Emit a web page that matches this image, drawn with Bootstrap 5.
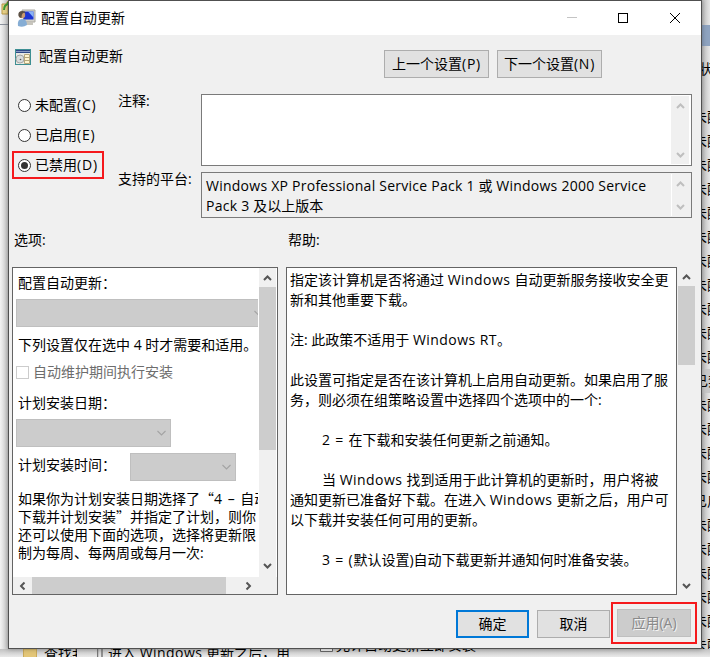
<!DOCTYPE html>
<html lang="zh-CN">
<head>
<meta charset="utf-8">
<title>配置自动更新</title>
<link href="https://cdn.jsdelivr.net/npm/bootstrap@5.3.0/dist/css/bootstrap.min.css" rel="stylesheet">
<style>
body{width:710px;height:657px;overflow:hidden;background:#f0f0f0;color:#000;font:14px/20px "Open Sans","Noto Sans CJK SC",sans-serif}
svg{display:block;flex:none}
.en{letter-spacing:.25px}
.word{letter-spacing:.45px}
.wide{letter-spacing:.8px}
.cjk{font-family:"Noto Sans CJK SC",sans-serif;line-height:0}
.backdrop{inset:0;background:#f0f0f0}
.edge-left{width:8px;background:linear-gradient(90deg,#f3f3f3,#c9c9c9)}
.edge-right{left:693px;width:17px;top:0;height:657px;background:linear-gradient(90deg,#bdbdbd 50%,#e6e6e6)}
.edge-right .state{height:24px;line-height:24px;overflow:hidden}
.edge-right .picked{background:#c9c9c9;padding-left:1px}
.list-head{height:21px;background:#8ea3c0;margin-top:25px}
.edge-bottom{left:0;right:0;top:649px;height:8px;background:linear-gradient(#c2c2c2,#e9e9e9)}
.dialog-win{left:8px;top:0;width:694px;height:649px;border:1px solid #505050;background:#f0f0f0;box-shadow:0 0 5px #0005}
.titlebar{height:34px;background:#fff;padding:0 20px 0 8px}
.wbtn{height:28px;width:105px;background:#e1e1e1;border:1px solid #adadad;border-radius:0;padding:0;font-size:14px;line-height:26px;color:#000}
.wbtn.foot{width:73px}
.wbtn.go{border:2px solid #0078d7;line-height:24px}
.wbtn.off{background:#ccc;border-color:#bfbfbf;color:#8a8a8a;text-shadow:1px 1px #f4f4f4;width:74px}
.heading{height:59px;padding:0 99px 0 6px}
.setup{height:136px;padding-left:3px}
.radios{width:102px;margin:-3px 4px 0 0}
.radios label{height:28px;margin-bottom:2px;padding-left:6px;border:2px solid transparent;width:92px}
.radios label.ringed{border-color:#f5191c}
.ring{width:13px;height:13px;border:1px solid #333;border-radius:50%;background:#fff;margin-left:-2px;margin-right:4px}
.ring.on::after{content:"";display:block;width:7px;height:7px;margin:2px;border-radius:50%;background:#333}
.names{width:87px}
.field{width:491px;border:1px solid #7a7a7a;padding:1px 2px 1px 1px}
.bar{width:17px;background:#f0f0f0;flex:none}
.field .bar{width:18px;padding:7px 0 6px;color:#bfbfbf}
.panel-box{border:1px solid #646464;background:#fff;height:328px}
.opts{width:245px;margin-right:1px;overflow:hidden;height:309px}
.opts .text-line{white-space:nowrap;padding-left:5px}
.combo{background:#ccc;border:1px solid #bfbfbf;height:28px;margin-left:3px}
.check{width:13px;height:13px;border:1px solid #ccc;background:#fff;margin-left:3px;margin-right:4px}
.thumb{background:#cdcdcd}
.help{width:391px;padding:2px 0 0 3px;white-space:pre}
.help div{height:20px}
.ind{padding-left:32px}
.apply-ring{border:2px solid #f5191c;width:86px;height:42px;padding:5px 0 0 4px}
</style>
<script src="https://cdn.jsdelivr.net/npm/bootstrap@5.3.0/dist/js/bootstrap.bundle.min.js"></script>
</head>
<body class="position-relative">
<svg width="0" height="0" class="position-absolute"><defs>
<symbol id="up" viewBox="0 0 9 6"><path d="M1 5 4.5 1.5 8 5" fill="none" stroke="currentColor" stroke-width="2"/></symbol>
<symbol id="down" viewBox="0 0 9 6"><path d="M1 1 4.5 4.5 8 1" fill="none" stroke="currentColor" stroke-width="2"/></symbol>
<symbol id="thin" viewBox="0 0 9 6"><path d="M.5 1 4.5 5 8.5 1" fill="none" stroke="#a3a3a3" stroke-width="1.1"/></symbol>
</defs></svg>

<div class="backdrop position-absolute overflow-hidden">
  <div class="edge-left h-100"><svg width="8" height="30"><path d="M2 4h4l2-3v13H2z" fill="#e9d38a" stroke="#b99a48"/><path d="M4 10q0-5 4-6v-2" stroke="#3f9d35" stroke-width="2" fill="none"/><path d="M0 24.500h8" stroke="#8b919c"/></svg></div>
  <div class="edge-right position-absolute text-nowrap overflow-hidden">
    <div class="list-head"></div>
    <div class="state" style="margin:11px 0 24px 6px">状态</div>
    <div class="state">未配置</div><div class="state">未配置</div><div class="state">未配置</div><div class="state">未配置</div><div class="state">未配置</div><div class="state">未配置</div><div class="state">未配置</div><div class="state">未配置</div><div class="state">未配置</div><div class="state">未配置</div><div class="state">未配置</div>
    <div class="state picked">已禁用</div>
    <div class="state">未配置</div><div class="state">未配置</div><div class="state">未配置</div><div class="state">未配置</div>
    <div class="state">已启用</div>
    <div class="state">未配置</div><div class="state">未配置</div><div class="state">未配置</div><div class="state">未配置</div><div class="state">未配置</div><div class="state">未配置</div>
  </div>
  <div class="edge-bottom position-absolute d-flex overflow-hidden text-nowrap">
    <svg width="44" height="8"><path d="M23.500 8V0h13v8" fill="#e3c678" stroke="#c9a95a"/></svg>
    <div class="overflow-hidden" style="width:33px;margin:-6px 20px 0 0">查找我</div>
    <svg width="11" height="8"><path d="M.5 0v8M5 0v8" stroke="#777" stroke-width="1.500"/></svg>
    <div style="width:212px;margin-top:-6px">进入 <span class="word">Windows</span> 更新之后，用</div>
    <svg width="16" height="8"><path d="M.5-5v7.500h12V-5" fill="#eee" stroke="#666"/></svg>
    <div style="margin-top:-14px">允许自动更新立即安装</div>
  </div>
</div>

<main class="dialog-win position-absolute">
  <header class="titlebar d-flex align-items-center">
    <svg width="19" height="19" viewBox="0 0 19 19"><path d="M5 1h13v12H7z" fill="#d4d2ca" stroke="#aaa9a2"/><path d="M6.500 2.500h10v8h-10z" fill="#1d35d2"/><path d="M11 2.500h5.500v6z" fill="#8ab3f5"/><path d="M9 13h7v3H9z" fill="#c7c5bd"/><path d="M1 17q-1-7 4-7t5 6q-4 3-9 1z" fill="#86add4"/><circle cx="5" cy="6" r="3.200" fill="#c99b70"/><path d="M1.500 7q-1-5 4-5 3 0 3 2-4-1-4 5-2 0-3-2z" fill="#5b5045"/></svg>
    <span class="ms-1 me-auto" style="padding:0 0 1px 1px">配置自动更新</span>
    <svg width="114" height="12" viewBox="0 0 114 12" shape-rendering="crispEdges"><path d="M0 5.500h10" stroke="#c4c4c4"/><path d="M51.500 1.500h9v9h-9z" fill="none" stroke="#000"/><path d="m103 1 10 10m0-10-10 10" stroke="#000" shape-rendering="auto"/></svg>
  </header>

  <section class="heading d-flex">
    <svg width="16" height="16" viewBox="0 0 16 16" style="margin-top:14px"><path fill="#3d8f93" d="M0 0h16v16H0z"/><path fill="#e9e9e3" d="M1 4h14v11H1z"/><path fill="#8a9bc4" d="M1 1h14v3H1z"/><path stroke="#304a86" d="M1 1.500h14M1 3.500h14"/><circle cx="5" cy="10" r="4" fill="#d8dcdc" stroke="#a5a5a5"/><circle cx="5.500" cy="10.500" r=".8" fill="#555"/><path fill="#fff4cf" stroke="#b5a77c" d="M9.500 5.500h5v9h-5z"/><path stroke="#b5a77c" d="M10 8.500h4m-4 3h4"/></svg>
    <span style="margin:11px auto 0 8px">配置自动更新</span>
    <div class="d-flex gap-2" style="margin-top:15px"><button class="btn wbtn">上一个设置<span class="wide">(P)</span></button><button class="btn wbtn">下一个设置<span class="wide">(N)</span></button></div>
  </section>

  <section class="setup d-flex">
    <div class="radios d-flex flex-column">
      <label class="d-flex align-items-center text-nowrap"><i class="ring"></i>未配置<span class="wide">(C)</span></label>
      <label class="d-flex align-items-center text-nowrap"><i class="ring"></i>已启用<span class="wide">(E)</span></label>
      <label class="d-flex align-items-center text-nowrap ringed"><i class="ring on"></i>已禁用<span class="wide">(D)</span></label>
    </div>
    <div class="names"><div style="height:78px;margin-top:-3px">注释:</div><div>支持的平台:</div></div>
    <div class="d-flex flex-column" style="gap:6px;margin-left:-4px">
      <div class="field bg-white d-flex justify-content-end" style="height:72px">
        <div class="bar d-flex flex-column justify-content-between align-items-center"><svg width="9" height="6"><use href="#up"/></svg><svg width="9" height="6"><use href="#down"/></svg></div>
      </div>
      <div class="field d-flex justify-content-between" style="height:46px">
        <div class="text-nowrap" style="padding:2px 0 0 3px"><span class="en">Windows XP Professional Service Pack 1 </span>或 <span class="en">Windows 2000 Service</span><br><span class="en">Pack 3 </span>及以上版本</div>
        <div class="bar d-flex flex-column justify-content-between align-items-center border-start border-white"><svg width="9" height="6"><use href="#up"/></svg><svg width="9" height="6"><use href="#down"/></svg></div>
      </div>
    </div>
  </section>

  <div class="d-flex" style="height:37px;padding-left:5px"><div style="width:274px">选项:</div><div>帮助:</div></div>

  <section class="d-flex" style="padding-left:3px">
    <div class="panel-box" style="width:266px;margin-right:8px">
      <div class="d-flex">
        <div class="opts">
          <div class="text-line" style="padding-top:5px;height:31px">配置自动更新：</div>
          <div class="combo d-flex align-items-center justify-content-end overflow-hidden border-end-0" style="width:242px"><svg width="9" height="6" style="margin-right:-5px"><use href="#thin"/></svg></div>
          <div class="text-line" style="margin-top:8px">下列设置仅在选中 4 时才需要和适用。</div>
          <div class="d-flex align-items-center text-nowrap" style="height:20px;margin-top:7px;color:#6d6d6d"><i class="check"></i>自动维护期间执行安装</div>
          <div class="text-line" style="margin-top:11px;height:26px">计划安装日期：</div>
          <div class="combo d-flex align-items-center justify-content-end" style="width:155px;padding-right:4px"><svg width="9" height="6"><use href="#thin"/></svg></div>
          <div class="d-flex" style="margin-top:6px"><div class="text-line" style="width:114px;padding-top:2px">计划安装时间：</div><div class="combo d-flex align-items-center justify-content-end" style="width:106px;padding-right:4px"><svg width="9" height="6"><use href="#thin"/></svg></div></div>
          <div class="text-line" style="line-height:18px;margin-top:9px">如果你为计划安装日期选择了<span class="cjk">“</span><span style="letter-spacing:1px">4 – </span>自动<br>下载并计划安装<span class="cjk">”</span>并指定了计划，则你<br>还可以使用下面的选项，选择将更新限<br>制为每周、每两周或每月一次:</div>
        </div>
        <div class="bar d-flex flex-column align-items-center" style="color:#555;height:309px;padding:7px 0 8px"><svg width="9" height="6"><use href="#up"/></svg><div class="thumb w-100" style="height:163px;margin-top:6px"></div><svg class="mt-auto" width="9" height="6"><use href="#down"/></svg></div>
      </div>
      <div class="d-flex align-items-center" style="background:#f0f0f0;height:17px;color:#555;padding-left:5px"><svg width="9" height="6" style="transform:rotate(-90deg)"><use href="#up"/></svg><div class="thumb h-100" style="width:194px;margin:0 18px 0 5px"></div><svg width="9" height="6" style="transform:rotate(90deg)"><use href="#up"/></svg></div>
    </div>
    <div class="panel-box help"><div>指定该计算机是否将通过 <span class="word">Windows </span>自动更新服务接收安全更</div><div>新和其他重要下载。</div><div></div><div>注: 此政策不适用于 <span class="word">Windows RT</span>。</div><div></div><div>此设置可指定是否在该计算机上启用自动更新。如果启用了服</div><div>务，则必须在组策略设置中选择四个选项中的一个:</div><div></div><div class="ind"><span class="wide">2 = </span>在下载和安装任何更新之前通知。</div><div></div><div class="ind">当 <span class="word">Windows </span>找到适用于此计算机的更新时，用户将被</div><div>通知更新已准备好下载。在进入 <span class="word">Windows </span>更新之后，用户可</div><div>以下载并安装任何可用的更新。</div><div></div><div class="ind"><span class="wide">3 = (</span>默认设置)自动下载更新并通知何时准备安装。</div></div>
    <div class="bar d-flex flex-column align-items-center" style="color:#555;padding:7px 0 6px;margin-left:1px"><svg width="9" height="6"><use href="#up"/></svg><div class="thumb w-100" style="height:79px;margin-top:6px"></div><svg class="mt-auto" width="9" height="6"><use href="#down"/></svg></div>
  </section>

  <footer class="d-flex" style="padding:7px 0 0 447px"><button class="btn wbtn foot go" style="margin:8px 8px 0 0">确定</button><button class="btn wbtn foot" style="margin:8px 1px 0 0">取消</button><div class="apply-ring"><button class="btn wbtn off">应用(A)</button></div></footer>
</main>
</body>
</html>
